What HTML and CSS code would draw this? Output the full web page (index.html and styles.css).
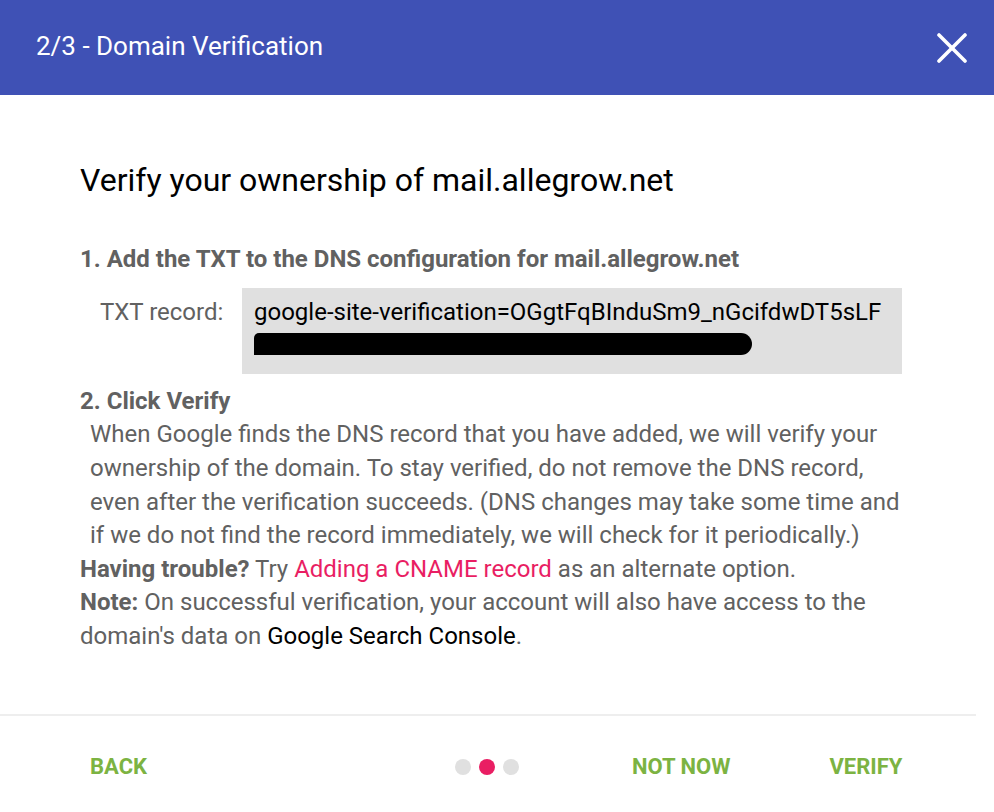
FILE: index.html
```html
<!DOCTYPE html>
<html>
<head>
<meta charset="utf-8">
<link rel="stylesheet" href="styles.css">
</head>
<body>
<div class="dialog">
  <header class="bar">
    <div class="bar-title">2/3 - Domain Verification</div>
    <svg class="close" width="30" height="30" viewBox="0 0 30 30"><line x1="2" y1="2" x2="28" y2="28"/><line x1="28" y1="2" x2="2" y2="28"/></svg>
  </header>
  <main class="content">
    <h1 class="title">Verify your ownership of mail.allegrow.net</h1>
    <h2 class="step">1. Add the TXT to the DNS configuration for mail.allegrow.net</h2>
    <div class="record-row">
      <div class="record-label">TXT record:</div>
      <div class="record-box">
        <div class="record-text">google-site-verification=OGgtFqBInduSm9_nGcifdwDT5sLF</div>
        <div class="redact"></div>
      </div>
    </div>
    <h2 class="step step2">2. Click Verify</h2>
    <p class="desc">When Google finds the DNS record that you have added, we will verify your<br>ownership of the domain. To stay verified, do not remove the DNS record,<br>even after the verification succeeds. (DNS changes may take some time and<br>if we do not find the record immediately, we will check for it periodically.)</p>
    <p class="note"><b>Having trouble?</b> Try <a class="link">Adding a CNAME record</a> as an alternate option.</p>
    <p class="note"><b>Note:</b> On successful verification, your account will also have access to the<br>domain's data on <span class="dark">Google Search Console</span>.</p>
  </main>
  <footer class="footer">
    <button class="btn back">BACK</button>
    <div class="dots"><span class="dot"></span><span class="dot active"></span><span class="dot"></span></div>
    <button class="btn notnow">NOT NOW</button>
    <button class="btn verify">VERIFY</button>
  </footer>
</div>
</body>
</html>
```
FILE: styles.css
```css
html, body {
  margin: 0;
  padding: 0;
  background: #fff;
}
body {
  font-family: Roboto, "Liberation Sans", sans-serif;
  width: 994px;
  height: 812px;
  overflow: hidden;
}
.dialog {
  width: 976px;
}
.bar {
  width: 994px;
  height: 95px;
  background: #3f51b5;
  display: flex;
  align-items: center;
  justify-content: space-between;
  box-sizing: border-box;
  padding: 0 27px 0 36px;
}
.bar-title {
  color: #fff;
  font-size: 26px;
  line-height: 30px;
  font-weight: 400;
  margin-top: -4px;
}
.close line {
  stroke: #fff;
  stroke-width: 3.6;
  stroke-linecap: round;
}
.content {
  padding: 0 0 0 80px;
  color: #616161;
  font-size: 24px;
  line-height: 33.6px;
}
.title {
  margin: 67px 0 0;
  font-size: 32px;
  line-height: 36px;
  font-weight: 400;
  color: #000;
}
.step {
  margin: 45px 0 0;
  font-size: 24px;
  line-height: 33.6px;
  font-weight: 700;
  color: #616161;
}
.step2 {
  margin-top: 10.5px;
}
.record-row {
  display: flex;
  margin-top: 11px;
  padding-left: 20px;
}
.record-label {
  width: 142px;
  padding-top: 8.5px;
}
.record-box {
  width: 660px;
  box-sizing: border-box;
  background: #e0e0e0;
  padding: 8.5px 12px 11px;
  color: #000;
}
.redact {
  width: 498px;
  height: 22px;
  margin: 3px 0 8.6px;
  background: #000;
  border-radius: 5px 11px 11px 0;
}
.desc {
  margin: 0;
  padding-left: 10px;
  white-space: nowrap;
}
.note {
  margin: 0;
  white-space: nowrap;
}
.note b {
  font-weight: 700;
}
.link {
  color: #e91e63;
}
.dark {
  color: #000;
}
.footer {
  margin-top: 60px;
  border-top: 2px solid #eeeeee;
  height: 97px;
  display: flex;
  align-items: center;
  padding: 7px 0 0 90px;
  box-sizing: border-box;
}
.btn {
  background: none;
  border: 0;
  padding: 0;
  font-family: Roboto, "Liberation Sans", sans-serif;
  font-weight: 700;
  font-size: 22px;
  color: #7cb342;
}
.dots {
  display: flex;
  gap: 8px;
  margin-left: 308px;
}
.dot {
  width: 16px;
  height: 16px;
  border-radius: 50%;
  background: #e0e0e0;
}
.dot.active {
  background: #e91e63;
}
.notnow {
  margin-left: 113px;
}
.verify {
  margin-left: 99px;
}
```
